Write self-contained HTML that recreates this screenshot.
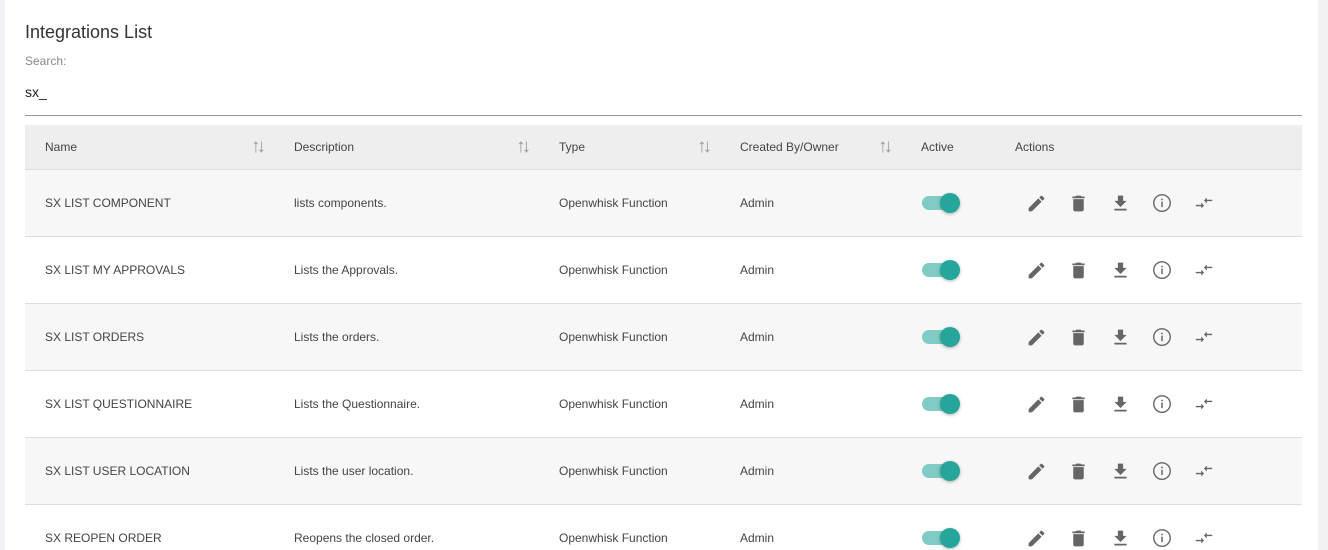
<!DOCTYPE html>
<html style="overflow:hidden"><head><style>
html,body{margin:0;width:1328px;height:550px;overflow:hidden;}
body{background:#f0f2f5;font-family:"Liberation Sans",Roboto,sans-serif;position:relative}
.card{position:absolute;left:5px;top:0;width:1313px;height:550px;background:#fff;overflow:hidden}
h1{position:absolute;left:20px;top:22px;margin:0;font-size:18px;font-weight:normal;color:#333;}
.lbl{position:absolute;left:20px;top:54px;font-size:12px;color:#888;}
.inp{position:absolute;left:20px;top:84px;font-size:14px;color:#222;}
.line{position:absolute;left:20px;top:115px;width:1277px;height:1px;background:#999;}
table{position:absolute;left:20px;top:125px;width:1277px;border-collapse:collapse;font-size:12px;color:#444;}
th{height:44px;background:#eee;text-align:left;font-weight:normal;padding:0;border-bottom:1px solid #ddd;position:relative;}
td{height:66px;padding:0;border-bottom:1px solid #ddd;}
tr.o td{background:#f7f7f7;}
.s{position:absolute;color:#999;font-size:19px;top:11px;letter-spacing:-4px}
.tg{position:relative;width:38px;height:20px;left:1px}
.tg:before{content:"";position:absolute;left:0;top:3px;width:36px;height:14px;border-radius:7px;background:#80cbc4}
.tg:after{content:"";position:absolute;left:18px;top:0;width:20px;height:20px;border-radius:50%;background:#26a69a;box-shadow:0 1px 3px rgba(0,0,0,.3)}
.ic{display:inline-block;width:42px;text-align:center;vertical-align:middle}
.ic svg{display:inline-block;vertical-align:middle}
</style></head><body>
<div class="card">
<h1>Integrations List</h1>
<div class="lbl">Search:</div>
<div class="inp">sx_</div>
<div class="line"></div>
<table>
<tr><th style="width:249px;padding-left:20px">Name<span class="s" style="left:226px">↑↓</span></th>
<th style="width:265px">Description<span class="s" style="left:222px">↑↓</span></th>
<th style="width:181px">Type<span class="s" style="left:138px">↑↓</span></th>
<th style="width:181px">Created By/Owner<span class="s" style="left:138px">↑↓</span></th>
<th style="width:94px">Active</th><th>Actions</th></tr>
</table>
</div>
<script>
const rows=[["SX LIST COMPONENT","lists components."],["SX LIST MY APPROVALS","Lists the Approvals."],["SX LIST ORDERS","Lists the orders."],["SX LIST QUESTIONNAIRE","Lists the Questionnaire."],["SX LIST USER LOCATION","Lists the user location."],["SX REOPEN ORDER","Reopens the closed order."]];
const icons=`<span class="ic"><svg width="21" height="21" viewBox="0 0 24 24"><path fill="#666" d="M3 17.25V21h3.75L17.81 9.94l-3.75-3.75L3 17.25zM20.71 7.04a1 1 0 000-1.41l-2.34-2.34a1 1 0 00-1.41 0l-1.83 1.83 3.75 3.75 1.83-1.83z"/></svg></span><span class="ic"><svg width="21" height="21" viewBox="0 0 24 24"><path fill="#666" d="M6 19c0 1.1.9 2 2 2h8c1.1 0 2-.9 2-2V7H6v12zM19 4h-3.5l-1-1h-5l-1 1H5v2h14V4z"/></svg></span><span class="ic"><svg width="21" height="21" viewBox="0 0 24 24"><path fill="#666" d="M19 9h-4V3H9v6H5l7 7 7-7zM5 18v2h14v-2H5z"/></svg></span><span class="ic"><svg width="22" height="22" viewBox="0 0 24 24"><circle cx="12" cy="12" r="9" fill="none" stroke="#666" stroke-width="1.5"/><rect x="11.2" y="10.5" width="1.6" height="6" fill="#666"/><circle cx="12" cy="8.2" r="1" fill="#666"/></svg></span><span class="ic"><svg width="22" height="22" viewBox="0 0 24 24"><path fill="#666" d="M9.01 14H3v1.5h6.01v2.5L12 14.75 9.01 11.5v2.5zm5.98-1.5v-2.5H21V8.5h-6.01V6L12 9.25l2.99 3.25z"/></svg></span>`;
let h="";rows.forEach((r,i)=>{h+=`<tr class="${i%2==0?'o':''}"><td style="padding-left:20px">${r[0]}</td><td>${r[1]}</td><td>Openwhisk Function</td><td>Admin</td><td><div class="tg"></div></td><td>${icons}</td></tr>`});
document.querySelector('table').insertAdjacentHTML('beforeend',h);
</script>
</body></html>
